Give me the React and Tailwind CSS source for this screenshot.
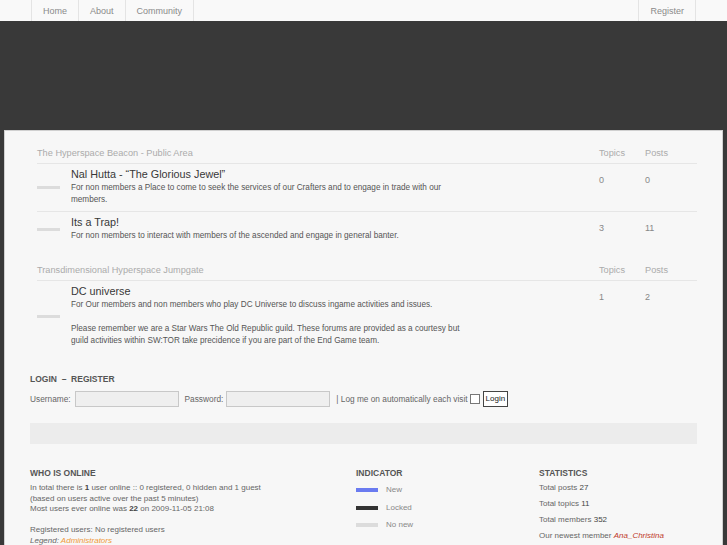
import React from "react";

const forums = [
  {
    title: "The Hyperspace Beacon - Public Area",
    rows: [
      {
        name: "Nal Hutta - \u201CThe Glorious Jewel\u201D",
        desc: ["For non members a Place to come to seek the services of our Crafters and to engage in trade with our members."],
        topics: 0,
        posts: 0,
      },
      {
        name: "Its a Trap!",
        desc: ["For non members to interact with members of the ascended and engage in general banter."],
        topics: 3,
        posts: 11,
      },
    ],
  },
  {
    title: "Transdimensional Hyperspace Jumpgate",
    rows: [
      {
        name: "DC universe",
        desc: [
          "For Our members and non members who play DC Universe to discuss ingame activities and issues.",
          "Please remember we are a Star Wars The Old Republic guild. These forums are provided as a courtesy but guild activities within SW:TOR take precidence if you are part of the End Game team.",
        ],
        topics: 1,
        posts: 2,
      },
    ],
  },
];

function ForumSection({ section, first }) {
  return (
    <div className={`ml-[7px] ${first ? "" : "mt-[16px]"}`}>
      <div className="flex border-b border-[#e6e6e6] pb-[3px] text-[9.2px] leading-[14px] text-[#ababab]">
        <div className="flex-1">{section.title}</div>
        <div className="w-[46px]">Topics</div>
        <div className="w-[52px]">Posts</div>
      </div>
      {section.rows.map((row, i) => (
        <div
          key={i}
          className={`flex pt-[4px] pb-[5px] ${i < section.rows.length - 1 ? "border-b border-[#e6e6e6]" : ""}`}
        >
          <div className="flex w-[34px] items-center">
            <div className="h-[3px] w-[23px] bg-[#dcdcdc]" />
          </div>
          <div className="flex-1">
            <div className="text-[10.8px] leading-[12px] text-[#383838]">{row.name}</div>
            <div className="mt-[2px] w-[400px] text-[8.2px] leading-[12px] text-[#555]">
              {row.desc.map((d, j) => (
                <p key={j} className={j > 0 ? "mt-[12px]" : ""}>
                  {d}
                </p>
              ))}
            </div>
          </div>
          <div className="w-[46px] pt-[6px] text-[9px] leading-[12px] text-[#888]">{row.topics}</div>
          <div className="w-[52px] pt-[6px] text-[9px] leading-[12px] text-[#888]">{row.posts}</div>
        </div>
      ))}
    </div>
  );
}

export default function App() {
  return (
    <div className="min-h-screen bg-[#393939] font-['Liberation_Sans',Arial,sans-serif]">
      {/* Top nav */}
      <div className="flex h-[21px] justify-between bg-[#f9f9f9] px-[31px] text-[9px] text-[#8a8a8a]">
        <div className="flex border-l border-[#e4e4e4]">
          {["Home", "About", "Community"].map((n) => (
            <div key={n} className="flex items-center border-r border-[#e4e4e4] px-[11px] pt-[3px]">
              {n}
            </div>
          ))}
        </div>
        <div className="flex">
          <div className="flex items-center border-l border-r border-[#e4e4e4] px-[11px] pt-[3px]">Register</div>
        </div>
      </div>

      {/* Main panel */}
      <div className="px-[4px] pt-[109px]">
        <div className="min-h-[440px] border border-[#d0d0d0] bg-[#f7f7f7] px-[25px] pt-[15px]">
          {forums.map((s, i) => (
            <ForumSection key={s.title} section={s} first={i === 0} />
          ))}

          {/* Login */}
          <div className="mt-[21px] text-[8.5px] font-bold leading-[12px] text-[#555]">
            LOGIN &nbsp;&ndash;&nbsp; REGISTER
          </div>
          <div className="mt-[6px] flex items-center text-[8.3px] text-[#666]">
            <span>Username:</span>
            <input className="ml-[4px] h-[16px] w-[104px] border border-[#c8c8c8] bg-[#efefef]" />
            <span className="ml-[6px]">Password:</span>
            <input className="ml-[3px] h-[16px] w-[104px] border border-[#c8c8c8] bg-[#efefef]" />
            <span className="ml-[6px]">| Log me on automatically each visit</span>
            <span className="ml-[2px] h-[10px] w-[10px] border border-[#777] bg-white" />
            <button className="ml-[3px] h-[16px] border border-[#444] bg-white px-[2px] text-[8px] text-[#222]">
              Login
            </button>
          </div>

          <div className="mt-[16px] h-[21px] bg-[#ececec]" />

          {/* Bottom columns */}
          <div className="mt-[23px] flex pb-[4px]">
            <div className="w-[326px]">
              <div className="text-[8.5px] font-bold leading-[12px] text-[#555]">WHO IS ONLINE</div>
              <div className="mt-[4px] text-[8px] leading-[10.5px] text-[#666]">
                <p>
                  In total there is <b className="text-[#444]">1</b> user online :: 0 registered, 0 hidden and 1 guest
                </p>
                <p>(based on users active over the past 5 minutes)</p>
                <p>
                  Most users ever online was <b className="text-[#444]">22</b> on 2009-11-05 21:08
                </p>
                <p className="mt-[10.5px]">Registered users: No registered users</p>
                <p className="italic">
                  Legend: <span className="text-[#f09a3a]">Administrators</span>
                </p>
              </div>
            </div>
            <div className="w-[183px]">
              <div className="text-[8.5px] font-bold leading-[12px] text-[#555]">INDICATOR</div>
              <div className="mt-[5px] flex flex-col gap-[5.5px] text-[8px] leading-[12px] text-[#888]">
                {[
                  ["New", "bg-[#6a7bf0]"],
                  ["Locked", "bg-[#333]"],
                  ["No new", "bg-[#dcdcdc]"],
                ].map(([l, c]) => (
                  <div key={l} className="flex items-center">
                    <div className={`h-[4px] w-[22px] ${c}`} />
                    <span className="ml-[8px]">{l}</span>
                  </div>
                ))}
              </div>
            </div>
            <div className="flex-1">
              <div className="text-[8.5px] font-bold leading-[12px] text-[#555]">STATISTICS</div>
              <div className="mt-[3px] flex flex-col gap-[4px] text-[8px] leading-[12px] text-[#666]">
                <p>Total posts <span className="text-[#444]">27</span></p>
                <p>Total topics <span className="text-[#444]">11</span></p>
                <p>Total members <span className="text-[#444]">352</span></p>
                <p>
                  Our newest member <span className="italic text-[#c0392b]">Ana_Christina</span>
                </p>
              </div>
            </div>
          </div>
        </div>
      </div>
    </div>
  );
}
